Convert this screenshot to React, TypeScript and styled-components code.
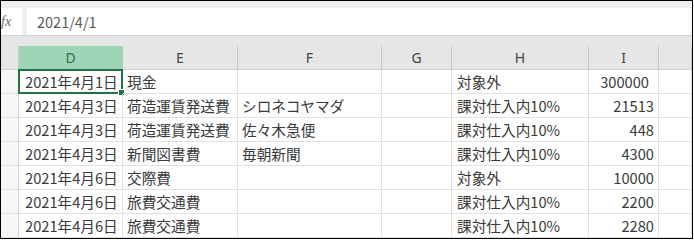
import { createGlobalStyle } from "styled-components";
import styled from "styled-components";

const GlobalStyle = createGlobalStyle`
  html, body {
    margin: 0;
    padding: 0;
    background: #ffffff;
  }
  body {
    font-family: "Noto Sans CJK JP", "Noto Sans", sans-serif;
  }
`;

interface RowData {
  date: string;
  account: string;
  partner: string;
  tax: string;
  amount: string;
  amountPad?: number;
}

const rows: RowData[] = [
  { date: "2021年4月1日", account: "現金", partner: "", tax: "対象外", amount: "300000", amountPad: 9 },
  { date: "2021年4月3日", account: "荷造運賃発送費", partner: "シロネコヤマダ", tax: "課対仕入内10%", amount: "21513" },
  { date: "2021年4月3日", account: "荷造運賃発送費", partner: "佐々木急便", tax: "課対仕入内10%", amount: "448" },
  { date: "2021年4月3日", account: "新聞図書費", partner: "毎朝新聞", tax: "課対仕入内10%", amount: "4300" },
  { date: "2021年4月6日", account: "交際費", partner: "", tax: "対象外", amount: "10000" },
  { date: "2021年4月6日", account: "旅費交通費", partner: "", tax: "課対仕入内10%", amount: "2200" },
  { date: "2021年4月6日", account: "旅費交通費", partner: "", tax: "課対仕入内10%", amount: "2280" },
];

const columns = ["D", "E", "F", "G", "H", "I", "J"];

export default function App() {
  return (
    <>
      <GlobalStyle />
      <Frame>
        <FormulaBar>
          <FxBox>
            <FxGlyph>fx</FxGlyph>
          </FxBox>
          <FormulaInput>2021/4/1</FormulaInput>
        </FormulaBar>
        <HeaderGap />
        <Grid>
          <HeaderCell />
          {columns.map((col) => (
            <HeaderCell key={col} $active={col === "D"}>
              {col === "J" ? "" : col}
            </HeaderCell>
          ))}
          {rows.map((row, i) => (
            <Row key={i} row={row} selected={i === 0} />
          ))}
        </Grid>
      </Frame>
    </>
  );
}

function Row({ row, selected }: { row: RowData; selected: boolean }) {
  return (
    <>
      <RowHead />
      <Cell $padLeft={6}>
        {row.date}
        {selected && <Selection />}
      </Cell>
      <Cell>{row.account}</Cell>
      <Cell>{row.partner}</Cell>
      <Cell />
      <Cell $padLeft={5}>{row.tax}</Cell>
      <Cell $right $padRight={row.amountPad ?? 4}>
        {row.amount}
      </Cell>
      <Cell />
    </>
  );
}

const Frame = styled.div`
  width: 693px;
  height: 239px;
  box-sizing: border-box;
  border: 1px solid #000000;
  overflow: hidden;
  display: flex;
  flex-direction: column;
  background: #ffffff;
`;

const FormulaBar = styled.div`
  height: 35px;
  box-sizing: border-box;
  padding-top: 7px;
  border-bottom: 1px solid #d2d2d2;
  background: #efefef;
  display: flex;
  gap: 5px;
`;

const FxBox = styled.div`
  width: 21px;
  height: 27px;
  background: #ffffff;
  display: flex;
  align-items: center;
  overflow: hidden;
`;

const FxGlyph = styled.span`
  margin-left: 0;
  font-family: "Liberation Serif", serif;
  font-style: italic;
  font-size: 14px;
  color: #6a6a6a;
`;

const FormulaInput = styled.div`
  flex: 1;
  height: 27px;
  margin-right: 1px;
  background: #ffffff;
  display: flex;
  align-items: center;
  padding-left: 10px;
  font-size: 14.5px;
  color: #5a5a5a;
`;

const HeaderGap = styled.div`
  height: 10px;
  background: #e6e6e6;
`;

const Grid = styled.div`
  display: grid;
  grid-template-columns: 18px 104px 115px 144px 70px 137px 70px 33px;
  grid-auto-rows: 24px;
`;

const HeaderCell = styled.div<{ $active?: boolean }>`
  box-sizing: border-box;
  background: ${(p) => (p.$active ? "#9fd5b7" : "#e6e6e6")};
  border-right: 1px solid ${(p) => (p.$active ? "#9fd5b7" : "#c8c8c8")};
  border-bottom: 1px solid ${(p) => (p.$active ? "#217346" : "#d0d0d0")};
  display: flex;
  align-items: center;
  justify-content: center;
  font-family: "Noto Sans", sans-serif;
  font-size: 14px;
  color: ${(p) => (p.$active ? "#2f6e4a" : "#444444")};
`;

const RowHead = styled.div`
  box-sizing: border-box;
  background: #f7f7f7;
  border-right: 1px solid #d6d6d6;
  border-bottom: 1px solid #e2e2e2;
`;

const Cell = styled.div<{ $right?: boolean; $padLeft?: number; $padRight?: number }>`
  position: relative;
  box-sizing: border-box;
  border-right: 1px solid #e1e1e1;
  border-bottom: 1px solid #e1e1e1;
  display: flex;
  align-items: center;
  justify-content: ${(p) => (p.$right ? "flex-end" : "flex-start")};
  padding-left: ${(p) => (p.$padLeft ?? 4)}px;
  padding-right: ${(p) => (p.$padRight ?? 0)}px;
  font-size: 14.67px;
  color: #3a3a3a;
  white-space: nowrap;
  overflow: visible;
`;

const Selection = styled.div`
  position: absolute;
  left: -1px;
  top: -1px;
  right: -1px;
  bottom: -1px;
  border: 2px solid #217346;
  pointer-events: none;

  &::after {
    content: "";
    position: absolute;
    right: -4px;
    bottom: -4px;
    width: 5px;
    height: 5px;
    background: #217346;
    border: 1px solid #ffffff;
  }
`;
